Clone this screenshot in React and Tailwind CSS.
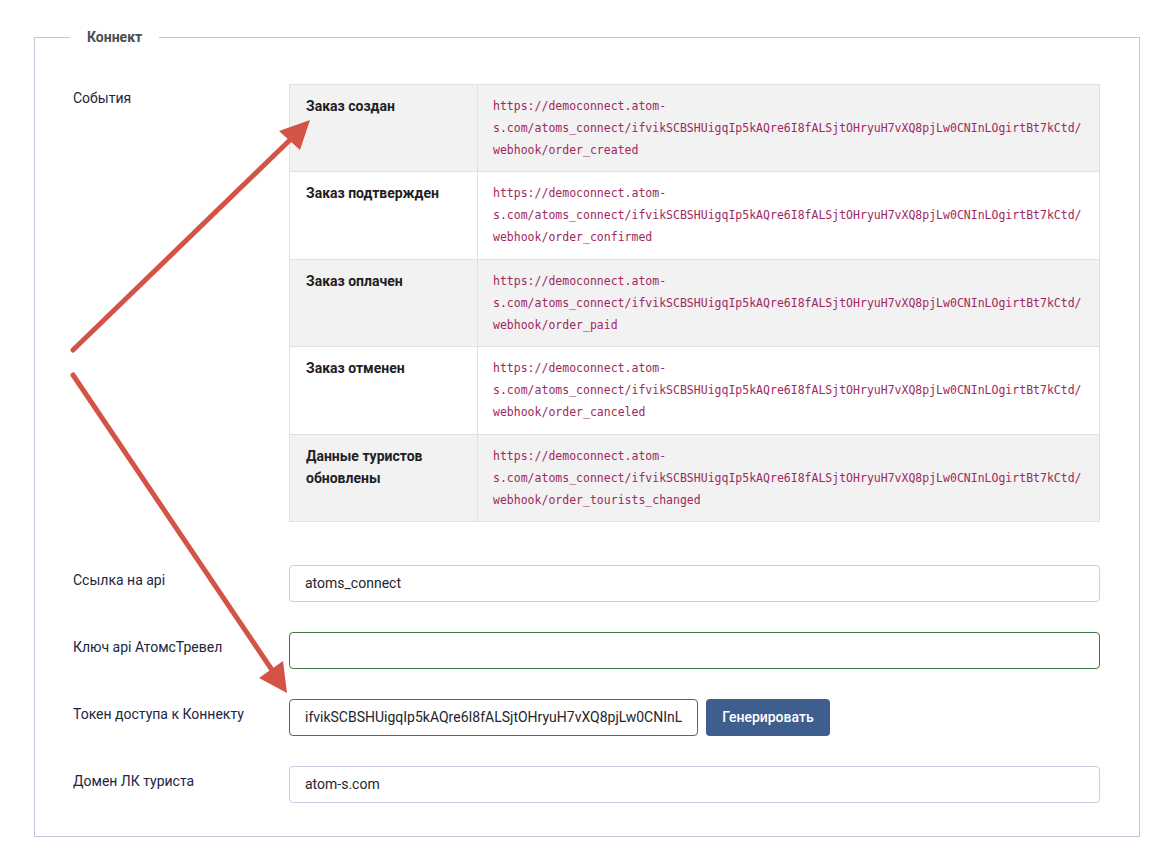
const events = [
  { title: "Заказ создан", hook: "order_created" },
  { title: "Заказ подтвержден", hook: "order_confirmed" },
  { title: "Заказ оплачен", hook: "order_paid" },
  { title: "Заказ отменен", hook: "order_canceled" },
  { title: "Данные туристов обновлены", hook: "order_tourists_changed" },
];

const token = "ifvikSCBSHUigqIp5kAQre6I8fALSjtOHryuH7vXQ8pjLw0CNInLOgirtBt7kCtd";

function Arrows() {
  return (
    <svg className="absolute left-0 top-0 pointer-events-none" width="1162" height="857">
      <g stroke="#d35446" strokeWidth="5" strokeLinecap="round" fill="#d35446">
        <line x1="73" y1="350" x2="292" y2="138" />
        <polygon points="310,120 279,131 300,150" stroke="none" />
        <line x1="73" y1="375" x2="272" y2="670" />
        <polygon points="287,693 259,678 283,661" stroke="none" />
      </g>
    </svg>
  );
}

function Row({ label, children }) {
  return (
    <div className="flex">
      <div className="w-[216px] shrink-0 pt-[4px] text-[14px] leading-[22px] text-[#1b2640]">{label}</div>
      <div className="flex-1 flex gap-2">{children}</div>
    </div>
  );
}

export default function App() {
  return (
    <div className="relative w-[1162px] h-[857px] bg-white font-['Roboto',sans-serif]">
      <div className="pt-[27px] pl-[34px] pr-[22px]">
        <fieldset className="border border-[#bcc7da] h-[810px] pl-[38px] pr-[39px]">
          <legend className="-ml-[3px] px-[17px] text-[14px] leading-[20px] font-bold text-[#4a4d52]">Коннект</legend>

          <div className="mt-[37px] flex">
            <div className="w-[216px] shrink-0 pt-[3px] text-[14px] leading-[22px] text-[#1b2640]">События</div>
            <table className="flex-1 border-collapse border border-[#e1e1e1]">
              <tbody>
                {events.map((e, i) => (
                  <tr key={e.hook} className={i % 2 === 0 ? "bg-[#f2f2f2] h-[87.4px]" : "bg-white h-[87.4px]"}>
                    <td className="w-[188px] border border-[#e1e1e1] align-top px-4 pt-[10px] pb-[10px] text-[14px] leading-[22px] font-bold text-[#1f2024]">
                      {e.title}
                    </td>
                    <td className="border border-[#e1e1e1] align-top px-[15px] pt-[10px] pb-[10px] font-['DejaVu_Sans_Mono',monospace] text-[11.5px] leading-[22px] text-[#a0285e] whitespace-nowrap">
                      <div>https://democonnect.atom-</div>
                      <div>s.com/atoms_connect/{token}/</div>
                      <div>webhook/{e.hook}</div>
                    </td>
                  </tr>
                ))}
              </tbody>
            </table>
          </div>

          <div className="mt-[43px] flex flex-col gap-[30px]">
            <Row label="Ссылка на api">
              <input
                readOnly
                value="atoms_connect"
                className="w-full h-[37px] rounded border border-[#c5cfe0] px-[15px] text-[14px] text-[#23262b] outline-none"
              />
            </Row>
            <Row label="Ключ api АтомсТревел">
              <input
                readOnly
                value=""
                className="w-full h-[37px] rounded border border-[#3f7a4d] px-[15px] text-[14px] text-[#23262b] outline-none"
              />
            </Row>
            <Row label="Токен доступа к Коннекту">
              <input
                readOnly
                value={token}
                className="w-[409px] h-[37px] rounded border border-[#3f7a4d] px-[15px] text-[14px] text-[#23262b] outline-none"
              />
              <button className="h-[37px] w-[124px] rounded bg-[#3e5f8e] text-white text-[14px] font-medium">
                Генерировать
              </button>
            </Row>
            <Row label="Домен ЛК туриста">
              <input
                readOnly
                value="atom-s.com"
                className="w-full h-[37px] rounded border border-[#c5cfe0] px-[15px] text-[14px] text-[#23262b] outline-none"
              />
            </Row>
          </div>
        </fieldset>
      </div>
      <Arrows />
    </div>
  );
}
